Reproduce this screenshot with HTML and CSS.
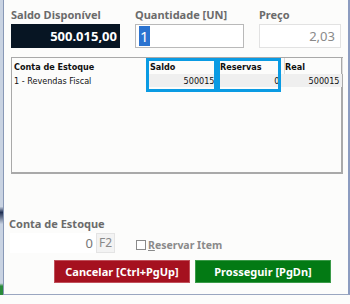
FILE: index.html
```html
<!DOCTYPE html>
<html lang="pt-BR">
<head>
  <meta charset="UTF-8" />
  <title>Estoque</title>
  <link rel="stylesheet" href="styles.css">
</head>
<body>
  <div class="screen">
    <div class="behind"></div>
    <div class="dialog">
      <div class="top-row">
        <div class="field">
          <label>Saldo Disponível</label>
          <div class="saldo-box">500.015,00</div>
        </div>
        <div class="field">
          <label>Quantidade [UN]</label>
          <div class="qty-box"><span class="sel">1</span></div>
        </div>
        <div class="field">
          <label>Preço</label>
          <div class="price-box">2,03</div>
        </div>
      </div>

      <div class="grid-wrap">
        <table class="grid">
          <tr>
            <th class="c-conta">Conta de Estoque</th>
            <th class="c-saldo">Saldo</th>
            <th class="c-res">Reservas</th>
            <th class="c-real">Real</th>
          </tr>
          <tr>
            <td class="c-conta">1 - Revendas Fiscal</td>
            <td class="num">500015</td>
            <td class="num">0</td>
            <td class="num">500015</td>
          </tr>
        </table>
        <div class="hl hl-saldo"></div>
        <div class="hl hl-res"></div>
      </div>

      <div class="bottom">
        <label>Conta de Estoque</label>
        <div class="conta-row">
          <div class="conta-box">0<span class="f2">F2</span></div>
          <div class="check"><span class="box"></span><u>R</u>eservar Item</div>
        </div>
        <div class="actions">
          <button class="btn cancel">Cancelar [Ctrl+PgUp]</button>
          <button class="btn go">Prosseguir [PgDn]</button>
        </div>
      </div>
    </div>
  </div>
</body>
</html>
```

FILE: styles.css
```css
body {
  margin: 0;
  background: #fcfcfb;
  font-family: 'Noto Sans', sans-serif;
}

.screen {
  display: flex;
  width: 350px;
  height: 304px;
  overflow: hidden;
}

.behind {
  width: 3px;
  height: 295px;
  background: linear-gradient(#c9d3e2 0, #c9d3e2 70%, #1f2f52 72%, #c9d3e2 76%, #c9d3e2 96%, #2a8a3a 97%);
  border-right: 1px solid #8898b6;
}

.dialog {
  width: 339px;
  height: 286px;
  padding: 8px 0 0 7px;
  background: #fcfcfb;
  border-right: 2px solid #8c9cc0;
  border-bottom: 1px solid #9aa6c0;
}

.top-row {
  display: grid;
  grid-template-columns: 109px 109px 82px;
  column-gap: 15px;
}

label {
  display: block;
  font-size: 11px;
  font-weight: bold;
  color: #6b6b6b;
  height: 16px;
  line-height: 13px;
}

.saldo-box {
  height: 24px;
  background: #071523;
  color: #fff;
  font-weight: bold;
  font-size: 13px;
  line-height: 24px;
  text-align: right;
  padding-right: 3px;
}

.qty-box {
  height: 20px;
  border: 1px solid #b9b9b9;
  background: #fff;
  padding: 1px 3px;
  font-size: 15px;
  line-height: 20px;
}

.sel {
  background: #2b73d0;
  color: #fff;
  padding: 0 1px;
}

.price-box {
  height: 20px;
  border: 1px solid #e2e2e2;
  background: #fff;
  padding: 1px 5px;
  font-size: 13px;
  line-height: 20px;
  color: #8a8a8a;
  text-align: right;
}

.grid-wrap {
  position: relative;
  margin-top: 9px;
  width: 329px;
  height: 114px;
  border: 1px solid #a9a9a9;
  border-right-width: 2px;
  border-bottom-width: 2px;
  background: #fcfcfb;
}

.grid {
  border-collapse: collapse;
  width: 331px;
  font-family: 'DejaVu Sans Condensed', sans-serif;
  font-size: 9px;
  color: #111;
}

.grid th {
  text-align: left;
  height: 15px;
  padding: 1px 2px 0;
  font-weight: bold;
  border-right: 1px solid #dcdcdc;
}

.grid th.c-res,
.grid th.c-real {
  padding-left: 0;
}

.grid td {
  height: 13px;
  padding: 0 2px;
}

.grid td.num {
  text-align: right;
  background: #efefef;
  padding-right: 5px;
}

.grid td.num:last-child {
  padding-right: 3px;
}

.c-conta { width: 131px; }
.c-saldo { width: 67px; }
.c-res { width: 62px; }

.hl {
  position: absolute;
  top: 0;
  height: 28px;
  border: 3px solid #0a9be3;
}

.hl-saldo {
  left: 134px;
  width: 65px;
}

.hl-res {
  left: 205px;
  width: 58px;
}

.bottom {
  margin-top: 43px;
}

.bottom label {
  height: 16px;
  margin-left: -2px;
}

.conta-row {
  display: flex;
  align-items: center;
  margin-left: -1px;
}

.conta-box {
  width: 105px;
  height: 20px;
  background: #fff;
  font-size: 13px;
  color: #777;
  line-height: 20px;
  display: flex;
  justify-content: flex-end;
  align-items: center;
  gap: 3px;
}

.f2 {
  display: inline-block;
  width: 17px;
  height: 18px;
  border: 1px solid #e4e4e4;
  background: #f3f3f3;
  font-size: 12px;
  line-height: 18px;
  text-align: center;
  color: #888;
}

.check {
  margin-left: 21px;
  font-size: 10.5px;
  font-weight: bold;
  color: #8a8a8a;
  display: flex;
  align-items: center;
  padding-top: 4px;
}

.check .box {
  width: 8px;
  height: 8px;
  border: 1px solid #8a8a8a;
  background: #fff;
  margin-right: 2px;
}

.actions {
  display: flex;
  gap: 5px;
  margin-top: 7px;
  margin-left: 43px;
}

.btn {
  width: 136px;
  height: 23px;
  border: 1px solid;
  color: #fff;
  font-family: 'Noto Sans', sans-serif;
  font-size: 11px;
  font-weight: bold;
  padding: 0;
}

.cancel {
  background: #a5111f;
  border-color: #c0505a;
}

.go {
  background: #037a14;
  border-color: #3a9a48;
}
```
